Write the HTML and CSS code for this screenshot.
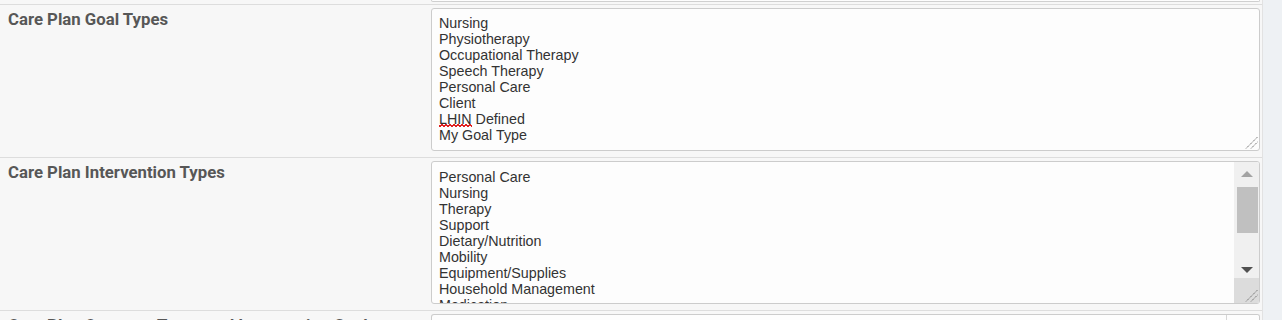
FILE: index.html
```html
<!DOCTYPE html>
<html lang="en">
<head>
<meta charset="utf-8">
<title>Care Plan Settings</title>
<link rel="stylesheet" href="styles.css">
</head>
<body>
<div class="page">
  <div class="panel">
    <div class="stub">
      <div></div>
      <div class="stub-box"></div>
    </div>

    <div class="row">
      <div class="label">Care Plan Goal Types</div>
      <div class="field">
        <div class="area">
          <div class="area-text">
            <div>Nursing</div>
            <div>Physiotherapy</div>
            <div>Occupational Therapy</div>
            <div>Speech Therapy</div>
            <div>Personal Care</div>
            <div>Client</div>
            <div><span class="spell">LHIN</span> Defined</div>
            <div>My Goal Type</div>
          </div>
          <svg class="grip" width="13" height="13" viewBox="0 0 13 13">
            <line x1="1" y1="12.5" x2="12.5" y2="1" />
            <line x1="6" y1="12.5" x2="12.5" y2="6" />
          </svg>
        </div>
      </div>
    </div>

    <div class="row">
      <div class="label">Care Plan Intervention Types</div>
      <div class="field">
        <div class="area scrolled">
          <div class="area-text">
            <div>Personal Care</div>
            <div>Nursing</div>
            <div>Therapy</div>
            <div>Support</div>
            <div>Dietary/Nutrition</div>
            <div>Mobility</div>
            <div>Equipment/Supplies</div>
            <div>Household Management</div>
            <div>Medication</div>
            <div>Other</div>
          </div>
          <div class="vscroll">
            <div class="btn up"><span class="tri tri-up"></span></div>
            <div class="track"><div class="thumb"></div></div>
            <div class="btn down"><span class="tri tri-down"></span></div>
            <div class="corner">
              <svg class="grip" width="13" height="13" viewBox="0 0 13 13">
                <line x1="1" y1="12.5" x2="12.5" y2="1" />
                <line x1="6" y1="12.5" x2="12.5" y2="6" />
              </svg>
            </div>
          </div>
        </div>
      </div>
    </div>

    <div class="row">
      <div class="label">Care Plan Outcome Types and Intervention Goals</div>
      <div class="field">
        <div class="area next">
          <div class="area-text"></div>
          <div class="vscroll-next"></div>
        </div>
      </div>
    </div>
  </div>
</div>
</body>
</html>
```

FILE: styles.css
```css
html, body {
  margin: 0;
  padding: 0;
}

body {
  background: #eef1f4;
  overflow: hidden;
  height: 320px;
}

.page {
  display: flex;
}

.panel {
  width: 1262px;
  background: #f7f7f7;
  border-right: 1px solid #e2e2e2;
}

.stub {
  display: grid;
  grid-template-columns: 431px 829px;
  height: 4px;
}

.stub-box {
  height: 1px;
  border: 1px solid #cfcfcf;
  border-top: none;
  border-radius: 0 0 3px 3px;
  background: #fdfdfd;
}

.row {
  display: grid;
  grid-template-columns: 431px 829px;
  border-top: 1px solid #dddddd;
  padding: 3px 0 6px 0;
}

.label {
  font-family: Roboto, "Liberation Sans", Arial, sans-serif;
  font-weight: 700;
  font-size: 16.75px;
  line-height: 20px;
  color: #575757;
  padding: 1px 0 0 8px;
  white-space: nowrap;
}

.field {
  display: flex;
}

.area {
  position: relative;
  flex: 1;
  height: 141px;
  border: 1px solid #cccccc;
  border-radius: 3px;
  background: #fdfdfd;
  display: flex;
  overflow: hidden;
}

.area-text {
  flex: 1;
  padding: 6px 7px;
  font-family: "Liberation Sans", Arial, sans-serif;
  font-size: 14.3px;
  line-height: 16px;
  color: #333333;
  overflow: hidden;
}

.scrolled .area-text {
  padding-top: 7px;
}

.spell {
  position: relative;
}

.spell::after {
  content: "";
  position: absolute;
  left: 0;
  right: 0;
  bottom: 0;
  height: 3px;
  background:
    linear-gradient(135deg, transparent 40%, #e02020 40%, #e02020 62%, transparent 62%) 0 0 / 4px 3px repeat-x,
    linear-gradient(45deg, transparent 40%, #e02020 40%, #e02020 62%, transparent 62%) 2px 0 / 4px 3px repeat-x;
}

.grip {
  position: absolute;
  right: 1px;
  bottom: 1px;
}

.grip line {
  stroke: #7a7a7a;
  stroke-width: 1;
  stroke-dasharray: 1.5 0.6;
}

.vscroll {
  width: 25px;
  background: #f0f0f0;
  display: flex;
  flex-direction: column;
  position: relative;
}

.btn {
  height: 23px;
  display: flex;
  align-items: center;
  justify-content: center;
}

.btn.up {
  padding-top: 1px;
}

.tri {
  width: 0;
  height: 0;
  border-left: 6px solid transparent;
  border-right: 6px solid transparent;
}

.tri-up {
  border-bottom: 6px solid #a3a3a3;
  margin-top: -2px;
}

.tri-down {
  border-top: 6px solid #505050;
  margin-top: 6px;
}

.track {
  flex: 1;
  padding-top: 1px;
}

.thumb {
  margin: 0 1px 0 3px;
  height: 46px;
  background: #c0c0c0;
}

.corner {
  height: 25px;
  background: #dcdcdc;
  position: relative;
}

.corner .grip {
  right: 1px;
  bottom: 1px;
}

.next {
  height: 20px;
  border-bottom: none;
  border-radius: 3px 3px 0 0;
}

.vscroll-next {
  width: 32px;
  border-left: 1px solid #d6d6d6;
  background: #fdfdfd;
}
```
